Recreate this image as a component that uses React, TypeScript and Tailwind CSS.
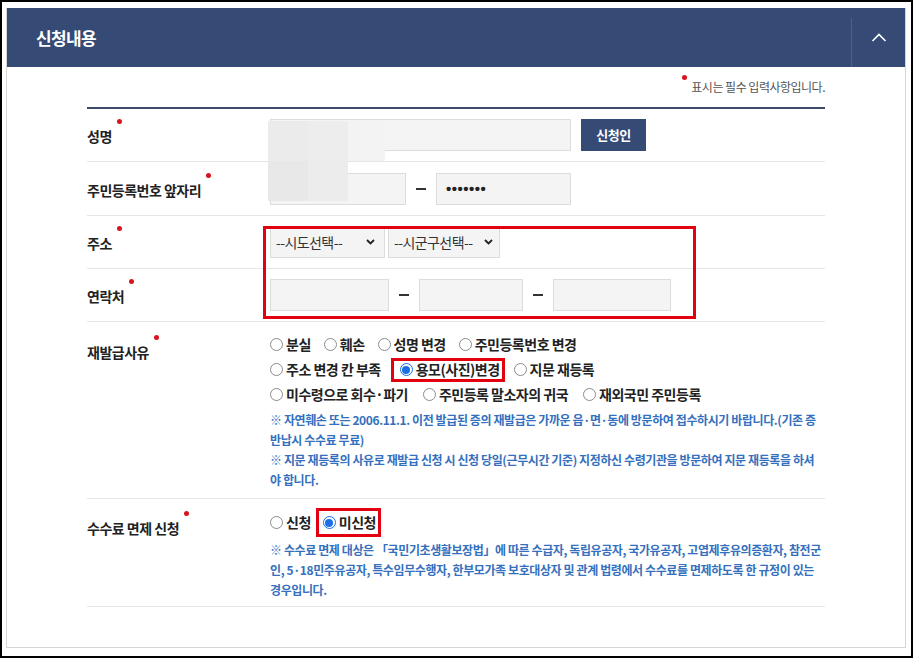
import React from "react";

const KR = "font-['Noto_Sans_CJK_KR','Noto_Sans',sans-serif]";

function ReqLabel({ text }: { text: string }) {
  return (
    <span className="relative text-[14px] font-bold leading-[20px] tracking-[-0.5px] text-[#222]">
      {text}
      <span className="absolute -right-[10px] -top-[7px] h-[5px] w-[5px] rounded-full bg-[#d7141f]" />
    </span>
  );
}

function Field({ className, children }: { className: string; children?: React.ReactNode }) {
  return (
    <div className={"flex h-[32px] items-center border border-[#dcdcdc] bg-[#f4f4f4] " + className}>
      {children}
    </div>
  );
}

function Dash() {
  return <span className="h-[2px] w-[10px] bg-[#333]" />;
}

function Select({ text, className }: { text: string; className: string }) {
  return (
    <div
      className={
        "flex h-[31px] items-center justify-between border border-[#dcdcdc] bg-[#f4f4f4] pl-[5px] text-[14px] tracking-[-0.6px] text-[#333] " +
        className
      }
    >
      <span>{text}</span>
      <svg width="9" height="6" viewBox="0 0 9 6" fill="none">
        <path d="M1 1l3.5 3.5L8 1" stroke="#222" strokeWidth="1.8" />
      </svg>
    </div>
  );
}

function Radio({ checked }: { checked?: boolean }) {
  if (checked) {
    return (
      <span className="flex h-[13px] w-[13px] shrink-0 items-center justify-center rounded-full border border-[#1a6fe6] bg-white">
        <span className="h-[8px] w-[8px] rounded-full bg-[#1a6fe6]" />
      </span>
    );
  }
  return <span className="h-[13px] w-[13px] shrink-0 rounded-full border border-[#8c8c8c] bg-white" />;
}

function Opt({ label, checked }: { label: string; checked?: boolean }) {
  return (
    <span className="flex items-center gap-[3px] whitespace-nowrap">
      <Radio checked={checked} />
      <span>{label}</span>
    </span>
  );
}

export default function App() {
  return (
    <div className={"h-[658px] w-[913px] border-2 border-black bg-white pl-[4px] pt-[6px] " + KR}>
      <div className="flex h-[640px] w-[900px] flex-col border-x border-b border-[#d6d6d6]">
        {/* header */}
        <div className="flex h-[59px] shrink-0 items-stretch bg-[#354b76]">
          <div className="flex flex-1 items-center pl-[29px] text-[17px] font-bold tracking-[-0.6px] text-white">
            신청내용
          </div>
          <div className="mt-[10px] flex w-[54px] items-center justify-center border-l border-[#4c6189] pb-[10px]">
            <svg width="16" height="9" viewBox="0 0 16 9" fill="none">
              <path d="M1.5 8L8 1.5 14.5 8" stroke="#fff" strokeWidth="1.6" />
            </svg>
          </div>
        </div>

        <div className="px-[80px]">
          <div className="flex justify-end pt-[12px]">
            <span className="relative text-[12px] leading-[16px] tracking-[-0.5px] text-[#555]">
              <span className="absolute -left-[9px] -top-[4px] h-[5px] w-[5px] rounded-full bg-[#d7141f]" />
              표시는 필수 입력사항입니다.
            </span>
          </div>

          <div className="relative mt-[12px] border-t-2 border-[#3b4b69]">
            {/* 성명 */}
            <div className="flex h-[53px] items-center border-b border-[#e6e6e6]">
              <div className="w-[183px] shrink-0">
                <ReqLabel text="성명" />
              </div>
              <div className="flex items-center gap-[10px]">
                <Field className="w-[301px]" />
                <button className="h-[32px] w-[65px] bg-[#354b76] text-[13px] font-bold tracking-[-0.5px] text-white">
                  신청인
                </button>
              </div>
            </div>

            {/* 주민등록번호 */}
            <div className="flex h-[54px] items-center border-b border-[#e6e6e6]">
              <div className="w-[183px] shrink-0">
                <ReqLabel text="주민등록번호 앞자리" />
              </div>
              <div className="flex items-center gap-[10px]">
                <Field className="w-[136px]" />
                <Dash />
                <Field className="w-[135px] pl-[9px]">
                  <span className="font-['Liberation_Sans',sans-serif] text-[15px] font-bold leading-none tracking-[0.5px] text-[#222]">
                    •••••••
                  </span>
                </Field>
              </div>
            </div>

            {/* 주소 */}
            <div className="flex h-[53px] items-center border-b border-[#e6e6e6]">
              <div className="w-[183px] shrink-0">
                <ReqLabel text="주소" />
              </div>
              <div className="flex items-center gap-[3px]">
                <Select text="--시도선택--" className="w-[115px] pr-[9px]" />
                <Select text="--시군구선택--" className="w-[112px] pr-[6px]" />
              </div>
            </div>

            {/* 연락처 */}
            <div className="flex h-[53px] items-center border-b border-[#e6e6e6]">
              <div className="w-[183px] shrink-0">
                <ReqLabel text="연락처" />
              </div>
              <div className="flex items-center gap-[10px]">
                <Field className="w-[119px]" />
                <Dash />
                <Field className="w-[104px]" />
                <Dash />
                <Field className="w-[118px]" />
              </div>
            </div>

            {/* 재발급사유 */}
            <div className="flex border-b border-[#e6e6e6] pb-[8px] pt-[10px]">
              <div className="w-[183px] shrink-0 pt-[7px]">
                <ReqLabel text="재발급사유" />
              </div>
              <div>
                <div className="text-[14px] font-semibold tracking-[-0.5px] text-[#222]">
                  <div className="flex h-[25px] items-center gap-[13px]">
                    <Opt label="분실" />
                    <Opt label="훼손" />
                    <Opt label="성명 변경" />
                    <Opt label="주민등록번호 변경" />
                  </div>
                  <div className="flex h-[25px] items-center">
                    <Opt label="주소 변경 칸 부족" />
                    <span className="ml-[10px] flex h-[24px] items-center border-[3px] border-[#e3000f] pl-[6px] pr-[2px]">
                      <Opt label="용모(사진)변경" checked />
                    </span>
                    <span className="ml-[9px]">
                      <Opt label="지문 재등록" />
                    </span>
                  </div>
                  <div className="flex h-[25px] items-center gap-[15px]">
                    <Opt label="미수령으로 회수·파기" />
                    <Opt label="주민등록 말소자의 귀국" />
                    <Opt label="재외국민 주민등록" />
                  </div>
                </div>
                <p className="mt-[3px] whitespace-nowrap text-[12px] font-bold leading-[20px] tracking-[-0.4px] text-[#3470bd]">
                  ※ 자연훼손 또는 2006.11.1. 이전 발급된 증의 재발급은 가까운 읍·면·동에 방문하여 접수하시기 바랍니다.(기존 증
                  <br />
                  반납시 수수료 무료)
                  <br />
                  ※ 지문 재등록의 사유로 재발급 신청 시 신청 당일(근무시간 기준) 지정하신 수령기관을 방문하여 지문 재등록을 하셔
                  <br />
                  야 합니다.
                </p>
              </div>
            </div>

            {/* 수수료 면제 신청 */}
            <div className="flex border-b border-[#e6e6e6] pb-[6px] pt-[9px]">
              <div className="w-[183px] shrink-0 pt-[7px]">
                <ReqLabel text="수수료 면제 신청" />
              </div>
              <div>
                <div className="flex h-[29px] items-center text-[14px] font-semibold tracking-[-0.5px] text-[#222]">
                  <Opt label="신청" />
                  <span className="ml-[5px] flex h-[29px] items-center border-[3px] border-[#e3000f] pl-[4px] pr-[2px]">
                    <Opt label="미신청" checked />
                  </span>
                </div>
                <p className="mt-[3px] whitespace-nowrap text-[12px] font-bold leading-[20px] tracking-[-0.4px] text-[#3470bd]">
                  ※ 수수료 면제 대상은 「국민기초생활보장법」에 따른 수급자, 독립유공자, 국가유공자, 고엽제후유의증환자, 참전군
                  <br />
                  인, 5·18민주유공자, 특수임무수행자, 한부모가족 보호대상자 및 관계 법령에서 수수료를 면제하도록 한 규정이 있는
                  <br />
                  경우입니다.
                </p>
              </div>
            </div>

            {/* blurred name mosaic */}
            <div className="absolute left-[181px] top-[12px] grid w-[117px] grid-cols-[40px_40px_37px] grid-rows-[40px_40px]">
              <span className="bg-[#ebebeb]" />
              <span className="bg-[#ededed]" />
              <span className="bg-[#f3f3f3]" />
              <span className="bg-[#e8e8e8]" />
              <span className="bg-[#ececec]" />
              <span />
            </div>

            {/* annotation box over address + contact */}
            <div className="absolute left-[176px] top-[117px] h-[93px] w-[433px] border-[3px] border-[#e3000f]" />
          </div>
        </div>
      </div>
    </div>
  );
}
